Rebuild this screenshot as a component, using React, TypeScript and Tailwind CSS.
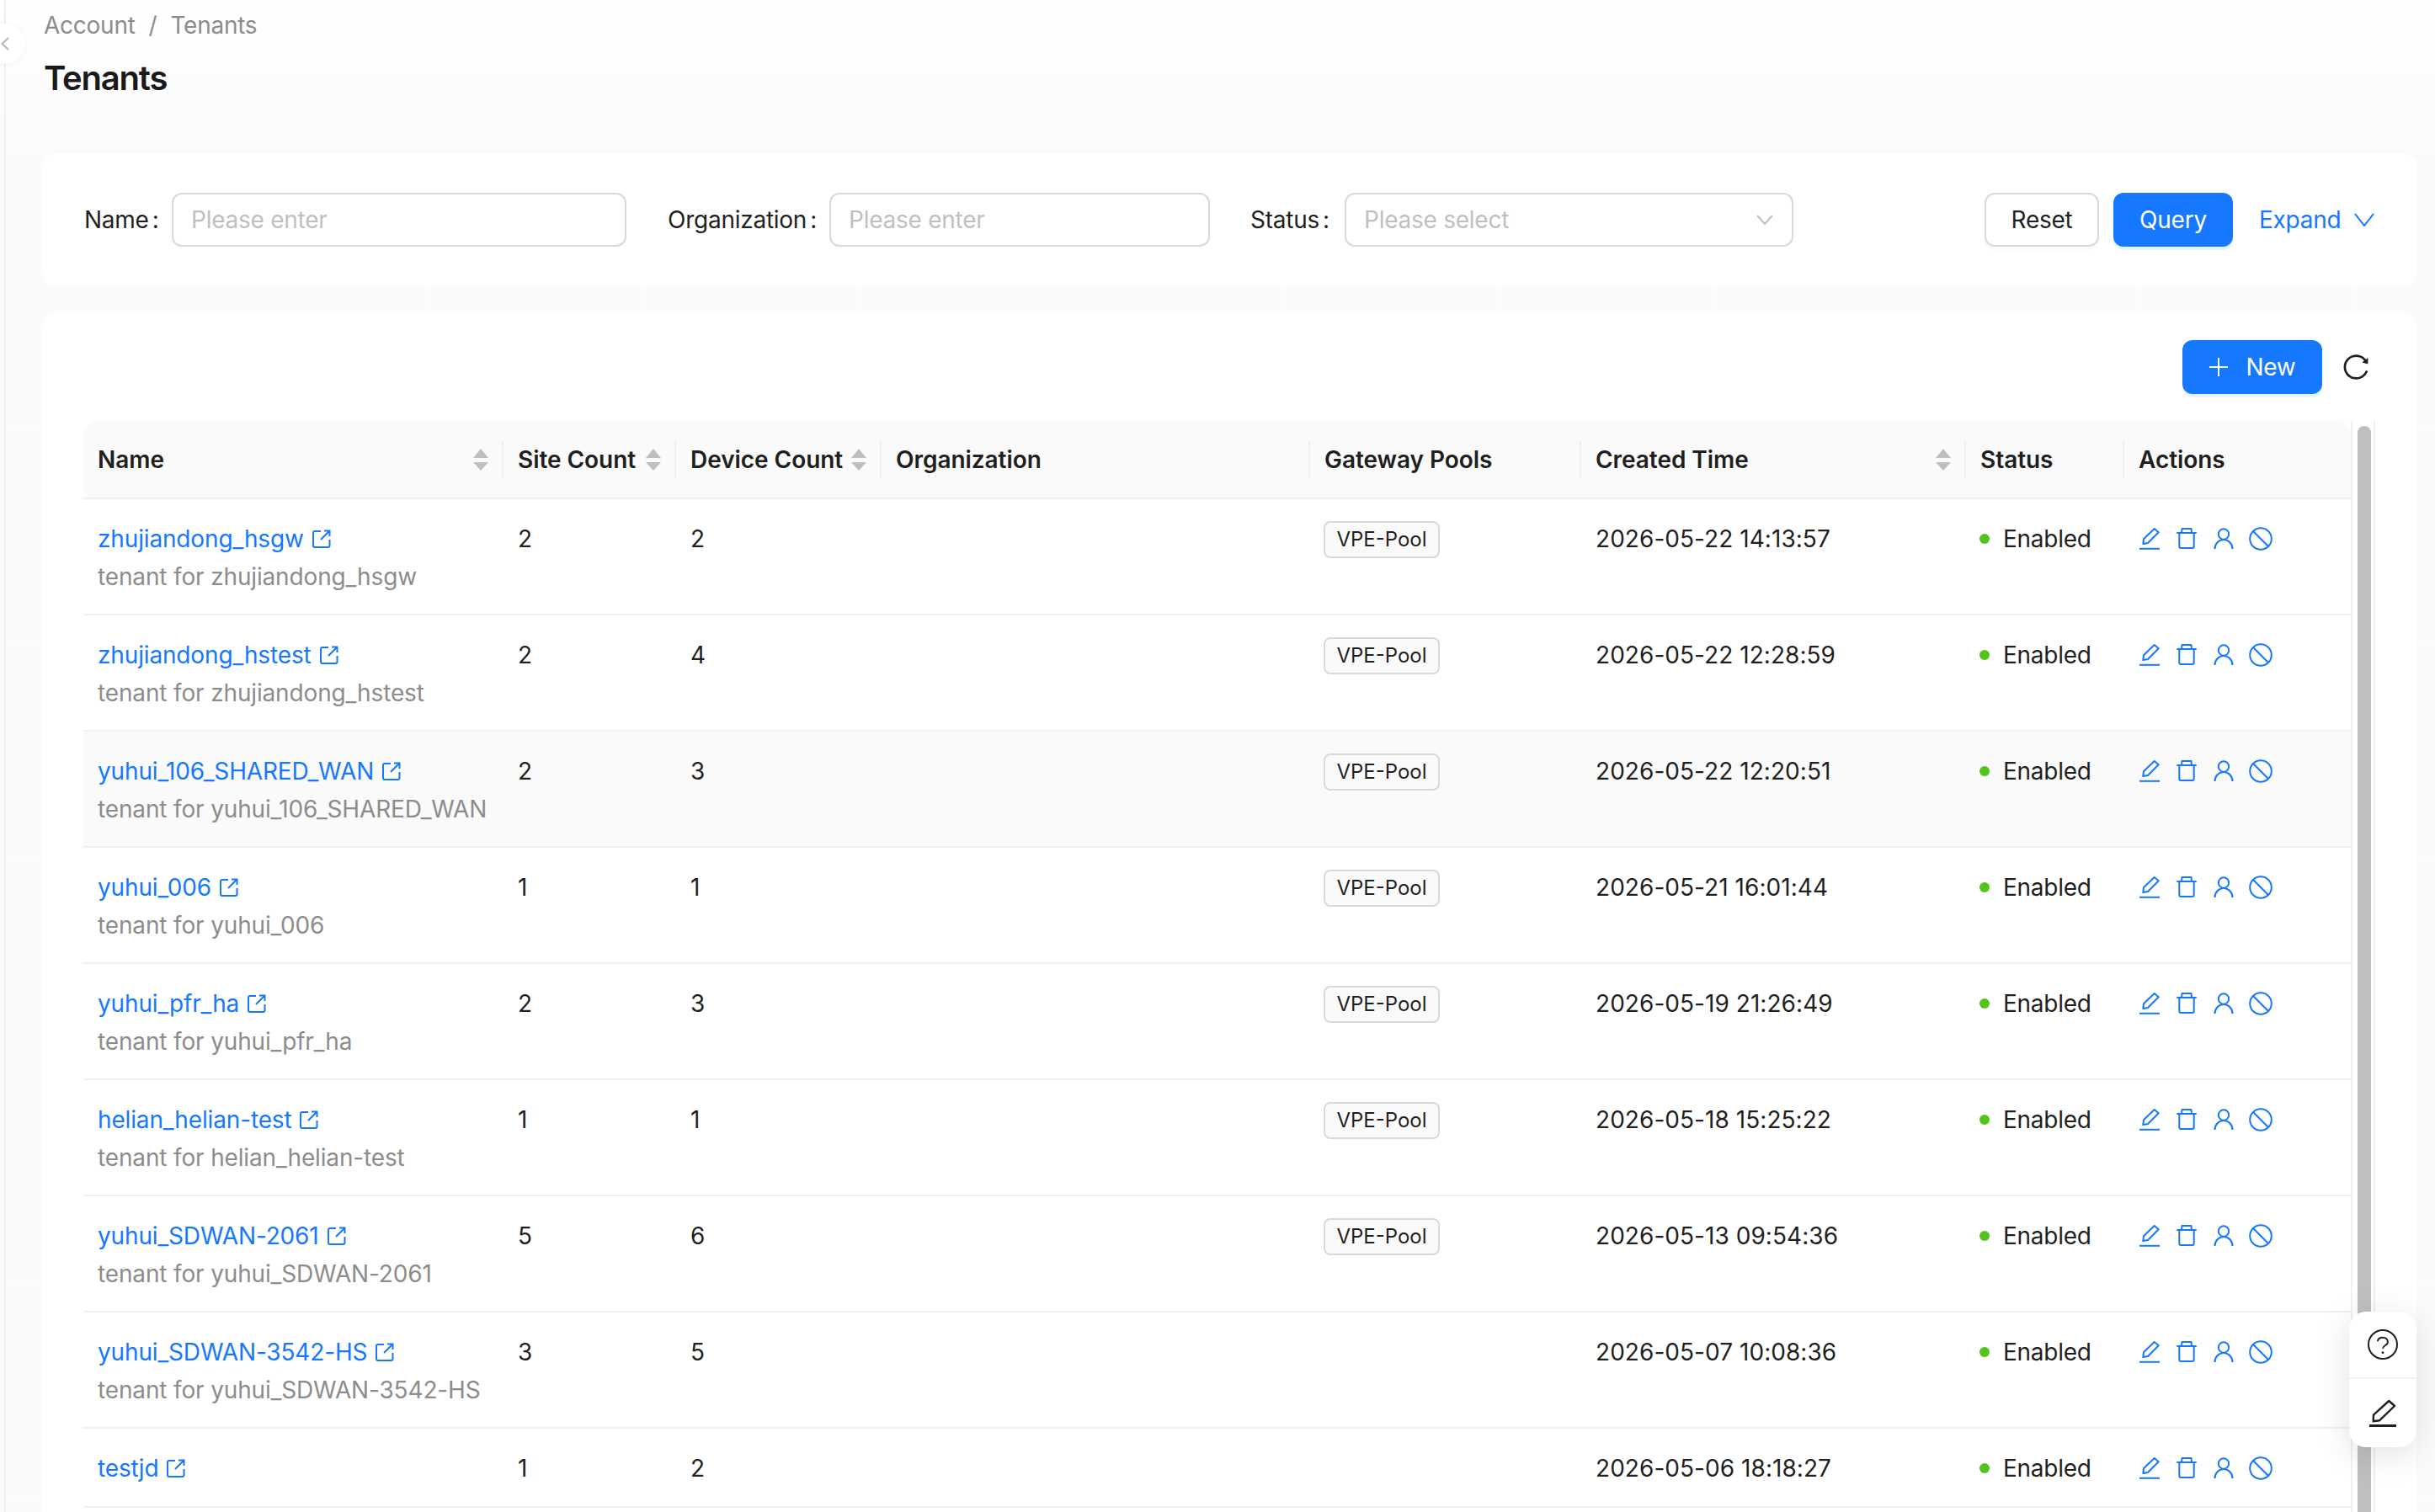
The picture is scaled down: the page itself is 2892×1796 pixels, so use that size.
import { AiOutlineReload } from "react-icons/ai";

const rows = [
  { name: "zhujiandong_hsgw", sites: 2, devices: 2, pool: true, time: "2026-05-22 14:13:57" },
  { name: "zhujiandong_hstest", sites: 2, devices: 4, pool: true, time: "2026-05-22 12:28:59" },
  { name: "yuhui_106_SHARED_WAN", sites: 2, devices: 3, pool: true, time: "2026-05-22 12:20:51", hover: true },
  { name: "yuhui_006", sites: 1, devices: 1, pool: true, time: "2026-05-21 16:01:44" },
  { name: "yuhui_pfr_ha", sites: 2, devices: 3, pool: true, time: "2026-05-19 21:26:49" },
  { name: "helian_helian-test", sites: 1, devices: 1, pool: true, time: "2026-05-18 15:25:22" },
  { name: "yuhui_SDWAN-2061", sites: 5, devices: 6, pool: true, time: "2026-05-13 09:54:36" },
  { name: "yuhui_SDWAN-3542-HS", sites: 3, devices: 5, pool: false, time: "2026-05-07 10:08:36" },
  { name: "testjd", sites: 1, devices: 2, pool: false, time: "2026-05-06 18:18:27", noDesc: true },
];

const columns = "grid grid-cols-[499px_205px_244px_509px_322px_457px_188px_269px]";

function Sorter() {
  return (
    <svg width="18" height="26" viewBox="0 0 18 26" className="shrink-0 fill-[#bfbfbf]">
      <path d="M9 0 L18 11 H0 Z" />
      <path d="M0 16 H18 L9 26 Z" />
    </svg>
  );
}

function HeadCell({ label, sort, last }: { label: string; sort?: boolean; last?: boolean }) {
  return (
    <div className={`flex h-[44px] items-center justify-between gap-[8px] self-center pl-[17px] pr-[16px] ${last ? "" : "border-r-2 border-[#f0f0f0]"}`}>
      <span>{label}</span>
      {sort && <Sorter />}
    </div>
  );
}

function ExternalIcon() {
  return (
    <svg width="22" height="22" viewBox="0 0 22 22" fill="none" stroke="#1677ff" strokeWidth="2" className="shrink-0">
      <path d="M10 2 H3 a2 2 0 0 0 -2 2 V19 a2 2 0 0 0 2 2 H18.5 a2 2 0 0 0 2-2 V12" />
      <path d="M10 12 L20 2 M14 1.5 H20.5 V8" />
    </svg>
  );
}

function ActionIcons() {
  return (
    <div className="flex h-[44px] items-center gap-[16px]">
      <svg width="28" height="28" viewBox="0 0 28 28" fill="none" stroke="#1677ff" strokeWidth="2" strokeLinejoin="round">
        <path d="M7 14.3 L19.7 2 L24.7 6.3 L12 19 L6.3 20 Z" />
        <path d="M2 25.8 H26" />
      </svg>
      <svg width="28" height="28" viewBox="0 0 28 28" fill="none" stroke="#1677ff" strokeWidth="2" strokeLinejoin="round">
        <path d="M2.3 7 H25.7" />
        <path d="M8 7 L8.5 2 H19.5 L20 7" />
        <path d="M5.3 7 V23 a2 2 0 0 0 2 2 H20.7 a2 2 0 0 0 2-2 V7" />
      </svg>
      <svg width="28" height="28" viewBox="0 0 28 28" fill="none" stroke="#1677ff" strokeWidth="2">
        <circle cx="14" cy="8.5" r="6.2" />
        <path d="M3.5 26 a10.5 11 0 0 1 21 0" />
      </svg>
      <svg width="28" height="28" viewBox="0 0 28 28" fill="none" stroke="#1677ff" strokeWidth="2">
        <circle cx="14" cy="14" r="12.8" />
        <path d="M5.3 5.3 L22.7 22.7" />
      </svg>
    </div>
  );
}

function Row({ row }: { row: (typeof rows)[number] }) {
  return (
    <div className={`${columns} border-b-2 border-[#f0f0f0] tracking-[-0.25px] ${row.noDesc ? "h-[94px]" : "h-[138px]"} ${row.hover ? "bg-[#fafafa]" : "bg-white"}`}>
      <div className="pl-[17px] pt-[25px] tracking-[-0.15px]">
        <div className="flex h-[44px] items-center gap-[10px] text-[#1677ff]">
          <span>{row.name}</span>
          <ExternalIcon />
        </div>
        {!row.noDesc && <div className="mt-[1px] h-[44px] whitespace-nowrap text-[#8c8c8c]">tenant for {row.name}</div>}
      </div>
      <div className="pl-[17px] pt-[25px]">{row.sites}</div>
      <div className="pl-[17px] pt-[25px]">{row.devices}</div>
      <div />
      <div className="pl-[16px] pt-[26px]">
        {row.pool && (
          <span className="flex h-[44px] w-[138px] items-center justify-center rounded-[8px] border-2 border-[#d9d9d9] bg-[#fafafa] text-[24px] tracking-normal">VPE-Pool</span>
        )}
      </div>
      <div className="pl-[17px] pt-[25px] tracking-[0.05px]">{row.time}</div>
      <div className="pl-[16px] pt-[25px]">
        <div className="flex h-[44px] items-center gap-[16px]">
          <span className="h-[12px] w-[12px] rounded-full bg-[#52c41a]" />
          <span>Enabled</span>
        </div>
      </div>
      <div className="pl-[16px] pt-[25px]">
        <ActionIcons />
      </div>
    </div>
  );
}

function TextBox({ placeholder, width, select }: { placeholder: string; width: string; select?: boolean }) {
  return (
    <div className={`flex h-[64px] items-center justify-between rounded-[12px] border-2 border-[#d9d9d9] bg-white pl-[21px] pr-[22px] tracking-[-0.25px] text-[#bfbfbf] ${width}`}>
      <span>{placeholder}</span>
      {select && (
        <svg width="20" height="14" viewBox="0 0 20 14" fill="none" stroke="#bfbfbf" strokeWidth="2">
          <path d="M1 2 L10 12 L19 2" />
        </svg>
      )}
    </div>
  );
}

function FieldLabel({ text, width }: { text: string; width: string }) {
  return (
    <label className={`shrink-0 whitespace-nowrap tracking-[-0.25px] ${width}`}>
      {text}
      <span className="ml-[4px]">:</span>
    </label>
  );
}

export default function App() {
  return (
    <div className="relative h-[1796px] w-[2892px] overflow-hidden bg-linear-to-b from-white from-[0px] to-[#fbfbfb] to-[180px] font-['Inter',sans-serif] text-[28px] leading-[44px] text-[#1f1f1f]">
      <div className="ml-[5px] h-full border-l-2 border-[#f0f0f0] pl-[44px] pr-[22px]">
        <div className="ml-[1px] flex h-[52px] items-end gap-[16px] tracking-[-0.25px] text-[#8c8c8c]">
          <span>Account</span>
          <span>/</span>
          <span>Tenants</span>
        </div>
        <h1 className="ml-[1px] mt-[13px] text-[40px] font-semibold leading-[56px] tracking-[-1.2px] text-[#1a1a1a]">Tenants</h1>

        <section className="mt-[61px] flex h-[158px] items-center rounded-[16px] bg-white pl-[49px] pr-[50px]">
          <FieldLabel text="Name" width="w-[104px]" />
          <TextBox placeholder="Please enter" width="w-[540px]" />
          <div className="w-[49px]" />
          <FieldLabel text="Organization" width="w-[192px]" />
          <TextBox placeholder="Please enter" width="w-[452px]" />
          <div className="w-[48px]" />
          <FieldLabel text="Status" width="w-[112px]" />
          <TextBox placeholder="Please select" width="w-[533px]" select />
          <div className="ml-auto flex items-center">
            <button className="h-[64px] w-[136px] rounded-[12px] border-2 border-[#d9d9d9] bg-white tracking-[-0.25px] shadow-[0_4px_0_rgba(0,0,0,0.02)]">Reset</button>
            <button className="ml-[17px] h-[64px] w-[142px] rounded-[12px] bg-[#1677ff] tracking-[-0.25px] text-white shadow-[0_4px_0_rgba(5,145,255,0.1)]">Query</button>
            <button className="ml-[31px] flex w-[137px] items-center justify-between tracking-[-0.25px] text-[#1677ff]">
              Expand
              <svg width="24" height="16" viewBox="0 0 24 16" fill="none" stroke="#1677ff" strokeWidth="2">
                <path d="M1 1 L12 15 L23 1" />
              </svg>
            </button>
          </div>
        </section>

        <section className="mt-[32px] rounded-[16px] bg-white pl-[48px] pr-[49px] pt-[32px]">
          <div className="mb-[32px] flex items-center justify-end pr-[5px]">
            <button className="flex h-[64px] w-[166px] items-center justify-center gap-[20px] rounded-[12px] bg-[#1677ff] tracking-[-0.25px] text-white shadow-[0_4px_0_rgba(5,145,255,0.1)]">
              <svg width="24" height="24" viewBox="0 0 24 24" stroke="#fff" strokeWidth="2">
                <path d="M12 1 V23 M1 12 H23" />
              </svg>
              New
            </button>
            <AiOutlineReload className="ml-[22px] h-[36px] w-[36px] text-[#1f1f1f]" />
          </div>

          <div className="flex">
            <div className="w-[2693px] shrink-0">
              <div className={`${columns} h-[93px] rounded-t-[16px] border-b-2 border-[#f0f0f0] bg-[#fafafa] font-semibold tracking-[-0.05px]`}>
                <HeadCell label="Name" sort />
                <HeadCell label="Site Count" sort />
                <HeadCell label="Device Count" sort />
                <HeadCell label="Organization" />
                <HeadCell label="Gateway Pools" />
                <HeadCell label="Created Time" sort />
                <HeadCell label="Status" />
                <HeadCell label="Actions" last />
              </div>
              {rows.map((row) => (
                <Row key={row.name} row={row} />
              ))}
            </div>
            <div className="w-[29px] shrink-0 border-x-2 border-[#f0f0f0] pl-[6px] pt-[6px]">
              <div className="h-[1400px] w-[16px] rounded-t-[8px] bg-[#bfbfbf]" />
            </div>
          </div>
        </section>
      </div>

      {/* collapse handle */}
      <div className="absolute left-[-18px] top-[28px] flex h-[48px] w-[48px] items-center justify-end rounded-full bg-white pr-[19px] shadow-[0_0_6px_rgba(0,0,0,0.05)]">
        <svg width="10" height="16" viewBox="0 0 10 16" fill="none" stroke="#b5b5b5" strokeWidth="2">
          <path d="M9 1 L1.5 8 L9 15" />
        </svg>
      </div>

      {/* floating help */}
      <div className="absolute left-[2790px] top-[1558px] flex h-[161px] w-[80px] flex-col rounded-[20px] bg-white shadow-[0_8px_40px_rgba(0,0,0,0.12)]">
        <div className="flex h-[80px] items-center justify-center border-b-2 border-[#f0f0f0]">
          <svg width="36" height="36" viewBox="0 0 36 36" fill="none" stroke="#1f1f1f" strokeWidth="2">
            <circle cx="18" cy="18" r="17" />
            <path d="M12 14.3 C12 11 15 9.7 18 9.7 C21 9.7 24 11.5 24 15.3 C24 19 18 19 18 22.7" />
            <circle cx="18" cy="27.7" r="1.4" fill="#1f1f1f" stroke="none" />
          </svg>
        </div>
        <div className="flex flex-1 items-center justify-center">
          <svg width="32" height="32" viewBox="0 0 32 32" fill="none" stroke="#1f1f1f" strokeWidth="2.4">
            <path d="M5 17.7 L23.3 1 L30 7 L12 24.3 L4.7 25.3 Z" strokeLinejoin="round" />
            <path d="M0 30.5 H32" strokeWidth="3" />
          </svg>
        </div>
      </div>
    </div>
  );
}
